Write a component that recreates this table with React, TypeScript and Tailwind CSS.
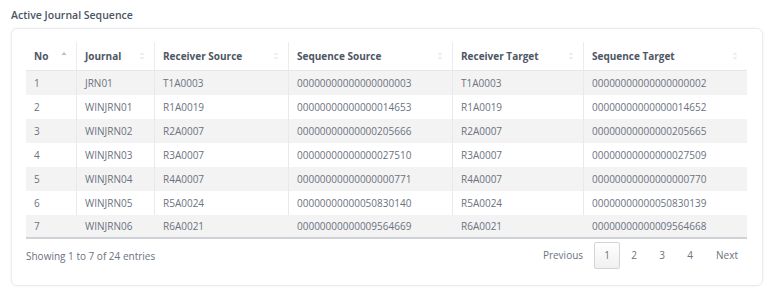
import React from "react";

const rows = [
  ["1", "JRN01", "T1A0003", "00000000000000000003", "T1A0003", "00000000000000000002"],
  ["2", "WINJRN01", "R1A0019", "00000000000000014653", "R1A0019", "00000000000000014652"],
  ["3", "WINJRN02", "R2A0007", "00000000000000205666", "R2A0007", "00000000000000205665"],
  ["4", "WINJRN03", "R3A0007", "00000000000000027510", "R3A0007", "00000000000000027509"],
  ["5", "WINJRN04", "R4A0007", "00000000000000000771", "R4A0007", "00000000000000000770"],
  ["6", "WINJRN05", "R5A0024", "00000000000050830140", "R5A0024", "00000000000050830139"],
  ["7", "WINJRN06", "R6A0021", "00000000000009564669", "R6A0021", "00000000000009564668"],
];

const cols = [
  { name: "No", w: "w-[51px]" },
  { name: "Journal", w: "w-[78px]" },
  { name: "Receiver Source", w: "w-[134px]" },
  { name: "Sequence Source", w: "w-[164px]" },
  { name: "Receiver Target", w: "w-[131px]" },
  { name: "Sequence Target", w: "w-[163px]" },
];

function SortIcon({ active }: { active?: boolean }) {
  return (
    <svg width="6" height="10" viewBox="0 0 6 10" className="shrink-0">
      <path d="M3 1 L5.5 4 H0.5 Z" fill={active ? "#b8bec6" : "#eceef0"} />
      {!active && <path d="M3 9 L5.5 6 H0.5 Z" fill="#eceef0" />}
    </svg>
  );
}

export default function App() {
  return (
    <div
      className="w-[768px] h-[292px] bg-white px-[11px] pt-[8px]"
      style={{ fontFamily: '"Open Sans", "Liberation Sans", sans-serif' }}
    >
      <div className="text-[10.5px] font-semibold text-[#4b5563] leading-[14px] h-[20px]">
        Active Journal Sequence
      </div>
      <div className="w-[752px] h-[258px] rounded-[6px] border border-[#e8eaed] shadow-[0_0_3px_rgba(0,0,0,0.06)] pl-[14px] pr-[15px] pt-[13px]">
        <div className="w-[721px]">
          <div className="flex h-[29px] border-b border-[#e6e6e6]">
            {cols.map((c, i) => (
              <div
                key={c.name}
                className={`${c.w} flex items-center justify-between pl-[8px] pr-[9px] text-[10px] font-bold text-[#4d5664] ${i < cols.length - 1 ? "border-r border-[#ececec]" : ""}`}
              >
                <span>{c.name}</span>
                <SortIcon active={i === 0} />
              </div>
            ))}
          </div>
          {rows.map((r, ri) => (
            <div
              key={ri}
              className={`flex h-[24px] ${ri % 2 === 0 ? "bg-[#f3f3f3]" : "bg-white"} ${ri === rows.length - 1 ? "border-b-2 border-[#cfd2d6]" : ""}`}
            >
              {r.map((v, ci) => (
                <div
                  key={ci}
                  className={`${cols[ci].w} flex items-center pl-[8px] text-[10px] text-[#6b7280] ${ri < rows.length - 1 && ci < cols.length - 1 ? "border-r border-[#e9e9e9]" : ""}`}
                >
                  {v}
                </div>
              ))}
            </div>
          ))}
          <div className="flex items-start justify-between pt-[3px]">
            <div className="text-[10px] text-[#6b7280] pt-[7px]">Showing 1 to 7 of 24 entries</div>
            <div className="flex items-center text-[10px] text-[#6b7280] pr-[9px]">
              <span className="mr-[11px]">Previous</span>
              <span className="w-[26px] h-[27px] flex items-center justify-center border border-[#d4d4d4] rounded-[2px] bg-gradient-to-b from-white to-[#f0f0f0]">
                1
              </span>
              <span className="w-[28px] text-center">2</span>
              <span className="w-[28px] text-center">3</span>
              <span className="w-[28px] text-center">4</span>
              <span className="ml-[12px]">Next</span>
            </div>
          </div>
        </div>
      </div>
    </div>
  );
}
